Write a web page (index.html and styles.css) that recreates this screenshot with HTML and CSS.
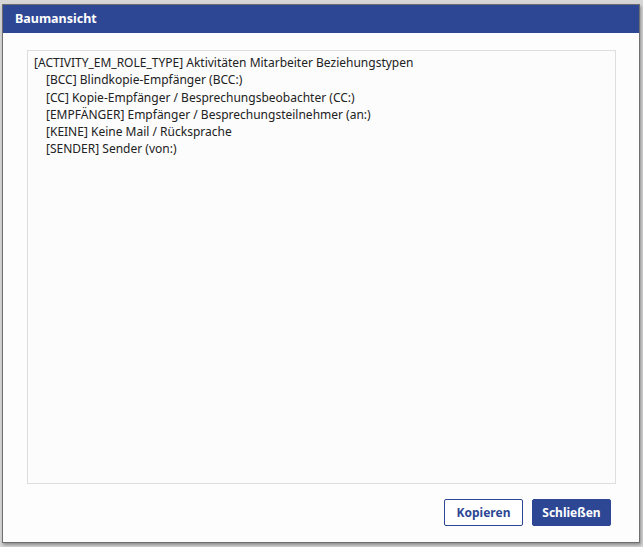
FILE: index.html
```html
<!DOCTYPE html>
<html lang="de">
<head>
	<meta charset="UTF-8">
	<title>Baumansicht</title>
	<link rel="stylesheet" href="styles.css">
</head>
<body>
	<div class="dialog">
		<header class="dialog-head">Baumansicht</header>

		<div class="dialog-body">
			<div class="tree">
				<div class="node">[ACTIVITY_EM_ROLE_TYPE] Aktivitäten Mitarbeiter Beziehungstypen</div>
				<div class="node child">[BCC] Blindkopie-Empfänger (BCC:)</div>
				<div class="node child">[CC] Kopie-Empfänger / Besprechungsbeobachter (CC:)</div>
				<div class="node child">[EMPFÄNGER] Empfänger / Besprechungsteilnehmer (an:)</div>
				<div class="node child">[KEINE] Keine Mail / Rücksprache</div>
				<div class="node child">[SENDER] Sender (von:)</div>
			</div>
		</div>

		<footer class="dialog-foot">
			<button class="btn">Kopieren</button>
			<button class="btn primary">Schließen</button>
		</footer>
	</div>
</body>
</html>
```

FILE: styles.css
```css
html, body {
	margin: 0;
	height: 100%;
}

body {
	box-sizing: border-box;
	padding: 4px 3px 0 2px;

	background: #d6d6d6;

	font-family: 'Noto Sans', 'Open Sans', sans-serif;
	font-size: 12px;
	color: #222;
}

.dialog {
	display: flex;
	flex-direction: column;
	box-sizing: border-box;

	width: 638px;
	height: 539px;

	border: 1px solid #6f6f6f;
	background: #fdfdfd;
	box-shadow: 1px 2px 3px rgba(0,0,0,.35);
}

.dialog-head {
	height: 28px;
	padding-left: 12px;

	line-height: 28px;
	font-size: 12.5px;
	font-weight: 700;
	color: #fff;

	background: #2d4795;
}

.dialog-body {
	flex: 1;
	display: flex;
	padding: 17px 23px 0 24px;
}

.tree {
	flex: 1;
	box-sizing: border-box;
	padding: 3px 6px;

	border: 1px solid #dedede;
	background: #fcfcfc;

	line-height: 17.3px;
}

.child {
	padding-left: 12px;
}

.dialog-foot {
	display: flex;
	justify-content: flex-end;
	gap: 9px;

	padding: 15px 28px 16px 0;
}

.btn {
	box-sizing: border-box;
	width: 79px;
	height: 27px;
	padding: 0;

	border: 1px solid #2d4795;
	border-radius: 2px;
	background: #fff;

	font-family: inherit;
	font-size: 12px;
	font-weight: 700;
	color: #2d4795;
}

.btn.primary {
	background: #2d4795;
	color: #fff;
}
```
